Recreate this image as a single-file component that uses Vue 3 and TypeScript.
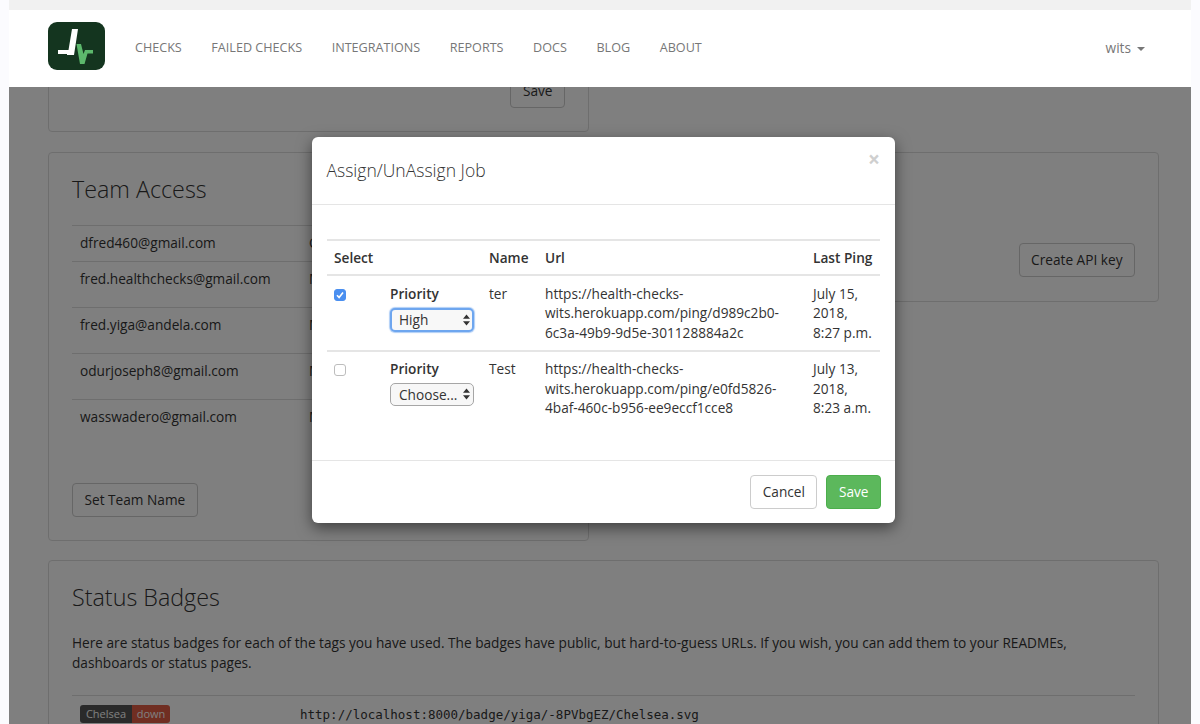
<script setup lang="ts">
interface Member { email: string; role: string; h: number }
interface Job { checked: boolean; priority: string; name: string; url: string[]; ping: string[] }

const navItems: string[] = ['Checks', 'Failed Checks', 'Integrations', 'Reports', 'Docs', 'Blog', 'About']

const members: Member[] = [
  { email: 'dfred460@gmail.com', role: 'Owner', h: 36 },
  { email: 'fred.healthchecks@gmail.com', role: 'Member', h: 46 },
  { email: 'fred.yiga@andela.com', role: 'Member', h: 46 },
  { email: 'odurjoseph8@gmail.com', role: 'Member', h: 46 },
  { email: 'wasswadero@gmail.com', role: 'Member', h: 46 },
]

const jobs: Job[] = [
  {
    checked: true,
    priority: 'High',
    name: 'ter',
    url: ['https://health-checks-', 'wits.herokuapp.com/ping/d989c2b0-', '6c3a-49b9-9d5e-301128884a2c'],
    ping: ['July 15,', '2018,', '8:27 p.m.'],
  },
  {
    checked: false,
    priority: 'Choose...',
    name: 'Test',
    url: ['https://health-checks-', 'wits.herokuapp.com/ping/e0fd5826-', '4baf-460c-b956-ee9eccf1cce8'],
    ping: ['July 13,', '2018,', '8:23 a.m.'],
  },
]
</script>

<template>
  <div class="shot">
    <div class="strip"></div>
    <header class="navbar">
      <svg class="logo" width="57" height="48" viewBox="0 0 57 48" aria-label="healthchecks logo">
        <rect width="57" height="48" rx="9" fill="#14351f" />
        <path d="M10 28H20.5L24 7H30L26 33H19V32H10Z" fill="#fff" />
        <path d="M28.5 22H33L35.5 32L37 28H45V31.5H39.5L36.5 42H32Z" fill="#5cb86c" />
      </svg>
      <nav class="nav">
        <a v-for="item in navItems" :key="item" class="nav-link">{{ item }}</a>
      </nav>
      <div class="user">wits<span class="caret"></span></div>
    </header>

    <main class="page">
      <div class="content">
        <div class="columns">
          <section class="card save-card">
            <button class="btn">Save</button>
          </section>
          <div></div>

          <section class="card team-card">
            <h2 class="title">Team Access</h2>
            <table class="members">
              <tbody>
                <tr v-for="m in members" :key="m.email" :style="{ height: m.h + 'px' }">
                  <td class="email">{{ m.email }}</td>
                  <td>{{ m.role }}</td>
                </tr>
              </tbody>
            </table>
            <button class="btn team-btn">Set Team Name</button>
          </section>

          <section class="card api-card">
            <button class="btn">Create API key</button>
          </section>
        </div>

        <section class="card badges-card">
          <h2 class="title">Status Badges</h2>
          <p class="intro">
            Here are status badges for each of the tags you have used. The badges have public, but hard-to-guess URLs. If you wish, you can add them to your READMEs, dashboards or status pages.
          </p>
          <div class="badge-row">
            <span class="badge"><span class="badge-tag">Chelsea</span><span class="badge-state">down</span></span>
            <code class="badge-url">http://localhost:8000/badge/yiga/-8PVbgEZ/Chelsea.svg</code>
          </div>
        </section>
      </div>
      <div class="backdrop"></div>
    </main>

    <div class="modal">
      <div class="modal-header">
        <h4 class="modal-title">Assign/UnAssign Job</h4>
        <span class="close">×</span>
      </div>
      <div class="modal-body">
        <table class="jobs">
          <colgroup>
            <col class="c1" /><col class="c2" /><col class="c3" /><col class="c4" /><col class="c5" />
          </colgroup>
          <thead>
            <tr>
              <th>Select</th>
              <th></th>
              <th>Name</th>
              <th>Url</th>
              <th>Last Ping</th>
            </tr>
          </thead>
          <tbody>
            <tr v-for="job in jobs" :key="job.name">
              <td>
                <span class="check" :class="{ on: job.checked }">
                  <svg v-if="job.checked" width="12" height="12" viewBox="0 0 12 12">
                    <path d="M3 6.3L5.1 8.6L9 3.4" fill="none" stroke="#fff" stroke-width="1.6" />
                  </svg>
                </span>
              </td>
              <td>
                <div class="priority">Priority</div>
                <div class="select" :class="{ focus: job.checked }">
                  <span>{{ job.priority }}</span>
                  <svg width="7" height="12" viewBox="0 0 7 12">
                    <path d="M3.5 0.5L7 4.8H0Z M3.5 11.5L0 7.2H7Z" fill="#333" />
                  </svg>
                </div>
              </td>
              <td>{{ job.name }}</td>
              <td><div v-for="line in job.url" :key="line">{{ line }}</div></td>
              <td><div v-for="line in job.ping" :key="line">{{ line }}</div></td>
            </tr>
          </tbody>
        </table>
      </div>
      <div class="modal-footer">
        <button class="btn">Cancel</button>
        <button class="btn success">Save</button>
      </div>
    </div>
  </div>
</template>

<style>
html, body { margin: 0; background: #fbfbfe; }
</style>

<style scoped>
.shot {
  position: relative;
  width: 1200px;
  height: 724px;
  overflow: hidden;
  display: flex;
  flex-direction: column;
  padding: 0 9px;
  box-sizing: border-box;
  font-family: "Open Sans", "Liberation Sans", sans-serif;
  font-size: 13.66px;
  line-height: 19.5px;
  color: #333;
}
.strip { height: 10px; background: #f1f1f1; flex: none; }
.navbar {
  position: relative;
  z-index: 2;
  flex: none;
  height: 77px;
  background: #fff;
  display: flex;
  align-items: center;
  padding: 0 46px 0 39px;
}
.logo { flex: none; margin-top: -6px; }
.nav { display: flex; gap: 29.6px; margin-left: 30px; margin-top: -2px; }
.nav-link { color: #777; font-size: 12.6px; text-transform: uppercase; }
.user { margin-left: auto; margin-top: -2px; color: #777; display: flex; align-items: center; }
.caret {
  margin-left: 6px;
  margin-top: 2px;
  border-top: 4px solid #777;
  border-left: 4px solid transparent;
  border-right: 4px solid transparent;
}
.page {
  position: relative;
  flex: 1;
  overflow: hidden;
  background: #fff;
}
.content { padding: 0 32px 0 39px; margin-top: -50px; }
.columns {
  display: grid;
  grid-template-columns: 541px 549px;
  column-gap: 21px;
  row-gap: 20px;
  align-items: start;
}
.card {
  border: 1px solid #ddd;
  border-radius: 4px;
  box-sizing: border-box;
}
.save-card {
  height: 95px;
  display: flex;
  justify-content: flex-end;
  padding: 36px 23px 0 0;
}
.team-card { height: 389px; padding: 0 23px; }
.title {
  margin: 20px 0 0;
  font-size: 23.3px;
  font-weight: 300;
  line-height: 33px;
}
.members { width: 100%; border-collapse: collapse; margin-top: 19px; border-top: 1px solid #ddd; }
.members tr { border-bottom: 1px solid #ddd; }
.members tr:last-child { border-bottom: 0; }
.members td { padding: 7px 8px; vertical-align: top; }
.members .email { width: 213px; padding-right: 8px; white-space: nowrap; }
.team-btn { margin-top: 37px; }
.api-card {
  height: 150px;
  display: flex;
  justify-content: flex-end;
  align-items: flex-end;
  padding: 0 23px 24px 0;
}
.btn {
  height: 34px;
  padding: 0 11.5px;
  border: 1px solid #ccc;
  border-radius: 4px;
  background: #fff;
  color: #333;
  font: inherit;
  white-space: nowrap;
}
.btn.success { background: #5cb85c; border-color: #4cae4c; color: #fff; }
.badges-card { margin-top: 19px; height: 240px; padding: 0 23px; }
.intro { margin: 19px 0 0; }
.badge-row {
  margin-top: 23px;
  padding: 7px 8px;
  border-top: 1px solid #ddd;
  display: flex;
  align-items: center;
}
.badge {
  display: flex;
  width: 90px;
  height: 18px;
  border-radius: 3px;
  overflow: hidden;
  font-size: 11px;
  line-height: 18px;
  color: #fff;
}
.badge-tag { background: #555; width: 52px; text-align: center; flex: none; }
.badge-state { background: #e05d44; flex: 1; text-align: center; }
.badge-url {
  margin-left: 130px;
  margin-top: 2px;
  font-family: "DejaVu Sans Mono", "Liberation Mono", monospace;
  font-size: 12.5px;
}
.backdrop {
  position: absolute;
  inset: 0;
  background: rgba(0, 0, 0, 0.5);
}
.modal {
  position: absolute;
  left: 312px;
  top: 137px;
  width: 583px;
  height: 386px;
  background: #fff;
  border-radius: 6px;
  box-shadow: 0 5px 15px rgba(0, 0, 0, 0.5);
  display: flex;
  flex-direction: column;
}
.modal-header {
  position: relative;
  height: 68px;
  flex: none;
  box-sizing: border-box;
  border-bottom: 1px solid #e5e5e5;
  padding: 21px 15px 0 14.5px;
}
.modal-title { margin: 0; font-size: 17.55px; font-weight: 300; line-height: 25px; }
.close {
  position: absolute;
  right: 15px;
  top: 11px;
  font-size: 21px;
  font-weight: 700;
  line-height: 23px;
  color: #cfcfcf;
}
.modal-body { flex: 1; padding: 34px 15px 0; }
.jobs { width: 553px; table-layout: fixed; border-collapse: collapse; border-top: 2px solid #e5e5e5; }
.c1 { width: 55px; }
.c2 { width: 99px; }
.c3 { width: 56px; }
.c4 { width: 268px; }
.c5 { width: 75px; }
.jobs th {
  padding: 7px 8px 6px;
  text-align: left;
  font-weight: 600;
  white-space: nowrap;
  border-bottom: 2px solid #e5e5e5;
}
.jobs th:first-child { padding-left: 7px; }
.jobs td { padding: 8px; vertical-align: top; white-space: nowrap; }
.jobs td:first-child { padding-left: 7px; }
.jobs tbody tr + tr td { border-top: 2px solid #e5e5e5; padding-top: 7px; }
.check {
  display: flex;
  width: 12px;
  height: 12px;
  margin-top: 5px;
  box-sizing: border-box;
  border: 1px solid #bdbdbd;
  border-radius: 3px;
  background: #fff;
}
.check.on { background: #4a8ff0; border-color: #4a8ff0; }
.check svg { margin: -1px; flex: none; }
.priority { font-weight: 600; }
.select {
  margin-top: 4px;
  width: 83.5px;
  height: 23.5px;
  box-sizing: border-box;
  border: 1px solid #a6a6a6;
  border-radius: 5px;
  background: #f7f7f7;
  display: flex;
  align-items: center;
  justify-content: space-between;
  padding: 0 3px 0 8px;
  overflow: hidden;
}
.select.focus {
  margin-top: 5px;
  border: 2px solid #6ea6ef;
  padding: 0 2px 0 7px;
  box-shadow: 0 0 1px 1px rgba(110, 166, 239, 0.55);
  background: #f8f8f8;
}
.modal-footer {
  flex: none;
  height: 63px;
  box-sizing: border-box;
  border-top: 1px solid #e5e5e5;
  display: flex;
  justify-content: flex-end;
  gap: 9px;
  padding: 14px 14px 0 0;
}
</style>
